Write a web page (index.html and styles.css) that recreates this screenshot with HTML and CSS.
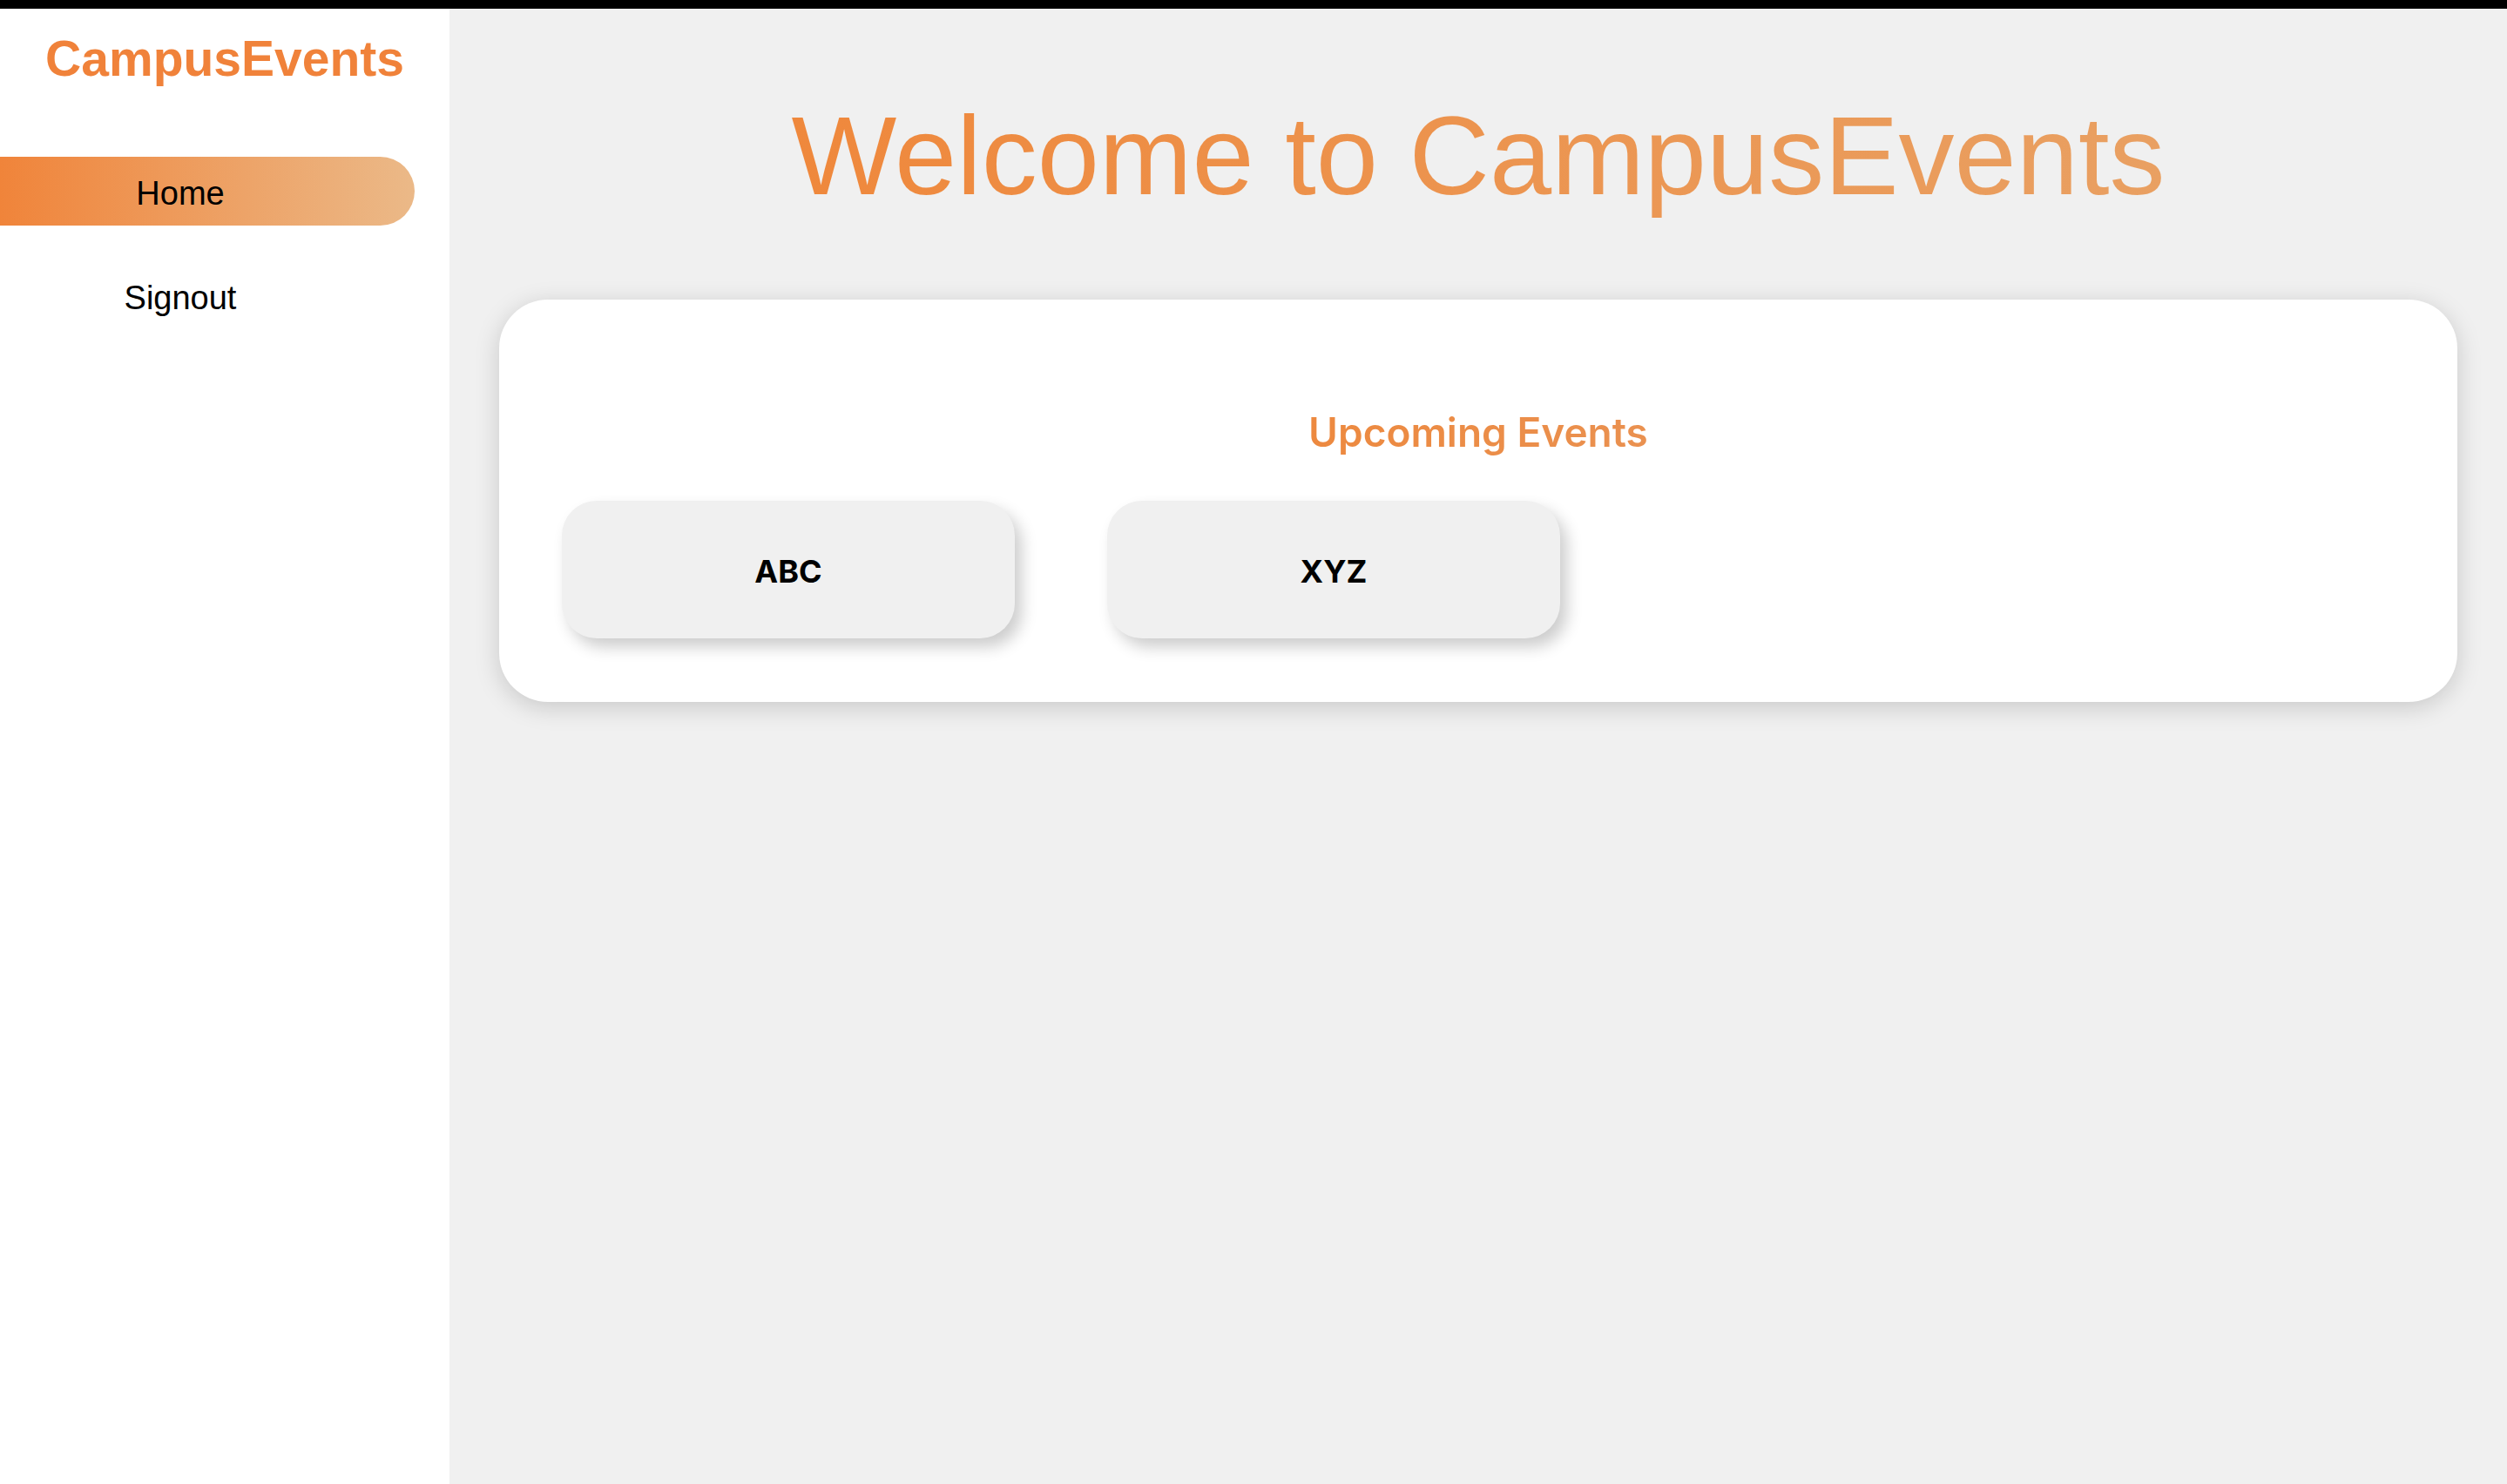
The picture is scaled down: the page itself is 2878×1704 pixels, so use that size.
FILE: index.html
```html
<!DOCTYPE html>
<html lang="en">
<head>
<meta charset="utf-8">
<title>CampusEvents</title>
<link rel="stylesheet" href="styles.css">
</head>
<body>
<div class="topbar"></div>
<div class="layout">
  <aside class="sidebar">
    <div class="logo">CampusEvents</div>
    <nav class="nav">
      <a class="nav-item active" href="#">Home</a>
      <a class="nav-item" href="#">Signout</a>
    </nav>
  </aside>
  <main class="main">
    <h1 class="title"><span class="grad-text">Welcome to CampusEvents</span></h1>
    <section class="panel">
      <h2 class="panel-title"><span class="grad-text-sm">Upcoming Events</span></h2>
      <div class="events">
        <div class="event-card">ABC</div>
        <div class="event-card">XYZ</div>
      </div>
    </section>
  </main>
</div>
</body>
</html>
```
FILE: styles.css
```css
html, body {
  margin: 0;
  padding: 0;
  height: 100%;
}
body {
  font-family: "Liberation Sans", Arial, Helvetica, sans-serif;
  background: #f0f0f0;
}
.topbar {
  height: 10px;
  background: #000;
}
.layout {
  display: flex;
  min-height: calc(100vh - 10px);
}
.sidebar {
  width: 516px;
  flex: 0 0 516px;
  background: #fff;
  padding-top: 25px;
  box-sizing: border-box;
}
.logo {
  font-size: 57px;
  font-weight: bold;
  color: #f0823a;
  text-align: center;
  line-height: 1.15;
}
.nav {
  display: flex;
  flex-direction: column;
  gap: 41px;
  margin-top: 79px;
}
.nav-item {
  display: block;
  width: 476px;
  box-sizing: border-box;
  padding: 21px 62px 15px 0;
  line-height: 43px;
  font-size: 38px;
  color: #000;
  text-decoration: none;
  text-align: center;
  border-radius: 0 40px 40px 0;
}
.nav-item.active {
  background: linear-gradient(to right, #f0843a, #ebb988);
}
.main {
  flex: 1;
  padding: 0 57px;
  box-sizing: border-box;
}
.title {
  margin: 95px 0 92px;
  font-size: 128px;
  font-weight: normal;
  line-height: 147px;
  text-align: center;
}
.grad-text {
  background: linear-gradient(to right, #ef883c, #e9a062);
  -webkit-background-clip: text;
  background-clip: text;
  color: transparent;
}
.panel {
  background: #fff;
  border-radius: 56px;
  box-shadow: 0 6px 28px rgba(0, 0, 0, 0.17);
  padding: 52px 72px 73px;
}
.panel-title {
  margin: 72px 0 50px;
  font-family: Inter, "Noto Sans", sans-serif;
  font-size: 46px;
  font-weight: 600;
  line-height: 57px;
  text-align: center;
}
.grad-text-sm {
  background: linear-gradient(to right, #ed893f, #ea9150);
  -webkit-background-clip: text;
  background-clip: text;
  color: transparent;
}
.events {
  display: flex;
  gap: 106px;
}
.event-card {
  width: 520px;
  height: 158px;
  box-sizing: border-box;
  padding-top: 3px;
  background: #f0f0f0;
  border-radius: 40px;
  box-shadow: 8px 10px 18px rgba(0, 0, 0, 0.2);
  display: flex;
  align-items: center;
  justify-content: center;
  font-family: Inter, "Noto Sans", sans-serif;
  font-weight: 700;
  font-size: 36px;
  color: #000;
}
```
